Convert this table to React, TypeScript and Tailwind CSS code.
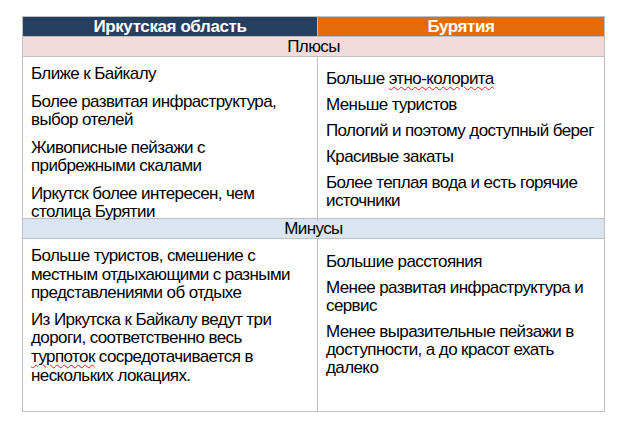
import React from "react";

const Item = ({ children, lh = "leading-[18px]" }: { children: React.ReactNode; lh?: string }) => (
  <p className={lh}>{children}</p>
);

const Sq = ({ children }: { children: React.ReactNode }) => (
  <span className="underline decoration-wavy decoration-[#e02020] decoration-1 underline-offset-2">{children}</span>
);

export default function App() {
  const m = "leading-[18.6px]";
  return (
    <div
      className="w-[628px] h-[432px] bg-white pt-[16px] pl-[22px] text-black"
      style={{ fontFamily: '"Liberation Sans", Arial, sans-serif' }}
    >
      <div className="w-[583px] border border-[#bfbfbf] text-[17px] tracking-[-0.6px]">
        <div className="grid grid-cols-[295px_1fr] h-[19px] font-bold text-white text-[17px] tracking-[-0.4px] leading-[19px]">
          <div className="bg-[#243f60] text-center border-r border-[#bfbfbf]">Иркутская область</div>
          <div className="bg-[#e36c09] text-center">Бурятия</div>
        </div>
        <div className="h-[20px] bg-[#f2dcdb] border-t border-[#bfbfbf] text-center leading-[19px]">Плюсы</div>
        <div className="grid grid-cols-[295px_1fr] h-[162px] border-t border-[#bfbfbf]">
          <div className="border-r border-[#bfbfbf] pl-[8px] pt-[8px] flex flex-col gap-[10px]">
            <Item>Ближе к Байкалу</Item>
            <Item>Более развитая инфраструктура,<br />выбор отелей</Item>
            <Item>Живописные пейзажи с<br />прибрежными скалами</Item>
            <Item>Иркутск более интересен, чем<br />столица Бурятии</Item>
          </div>
          <div className="pl-[8px] pt-[13px] flex flex-col gap-[8px]">
            <Item>Больше <Sq>этно-колорита</Sq></Item>
            <Item>Меньше туристов</Item>
            <Item>Пологий и поэтому доступный берег</Item>
            <Item>Красивые закаты</Item>
            <Item>Более теплая вода и есть горячие<br />источники</Item>
          </div>
        </div>
        <div className="h-[20px] bg-[#dbe5f1] border-t border-[#bfbfbf] text-center leading-[19px]">Минусы</div>
        <div className="grid grid-cols-[295px_1fr] h-[173px] border-t border-[#bfbfbf]">
          <div className="border-r border-[#bfbfbf] pl-[8px] pt-[8px] flex flex-col gap-[8px]">
            <Item lh={m}>Больше туристов, смешение с<br />местным отдыхающими с разными<br />представлениями об отдыхе</Item>
            <Item lh={m}>Из Иркутска к Байкалу ведут три<br />дороги, соответственно весь<br /><Sq>турпоток</Sq> сосредотачивается в<br />нескольких локациях.</Item>
          </div>
          <div className="pl-[8px] pt-[14px] flex flex-col gap-[8px]">
            <Item>Большие расстояния</Item>
            <Item>Менее развитая инфраструктура и<br />сервис</Item>
            <Item>Менее выразительные пейзажи в<br />доступности, а до красот ехать<br />далеко</Item>
          </div>
        </div>
      </div>
    </div>
  );
}
